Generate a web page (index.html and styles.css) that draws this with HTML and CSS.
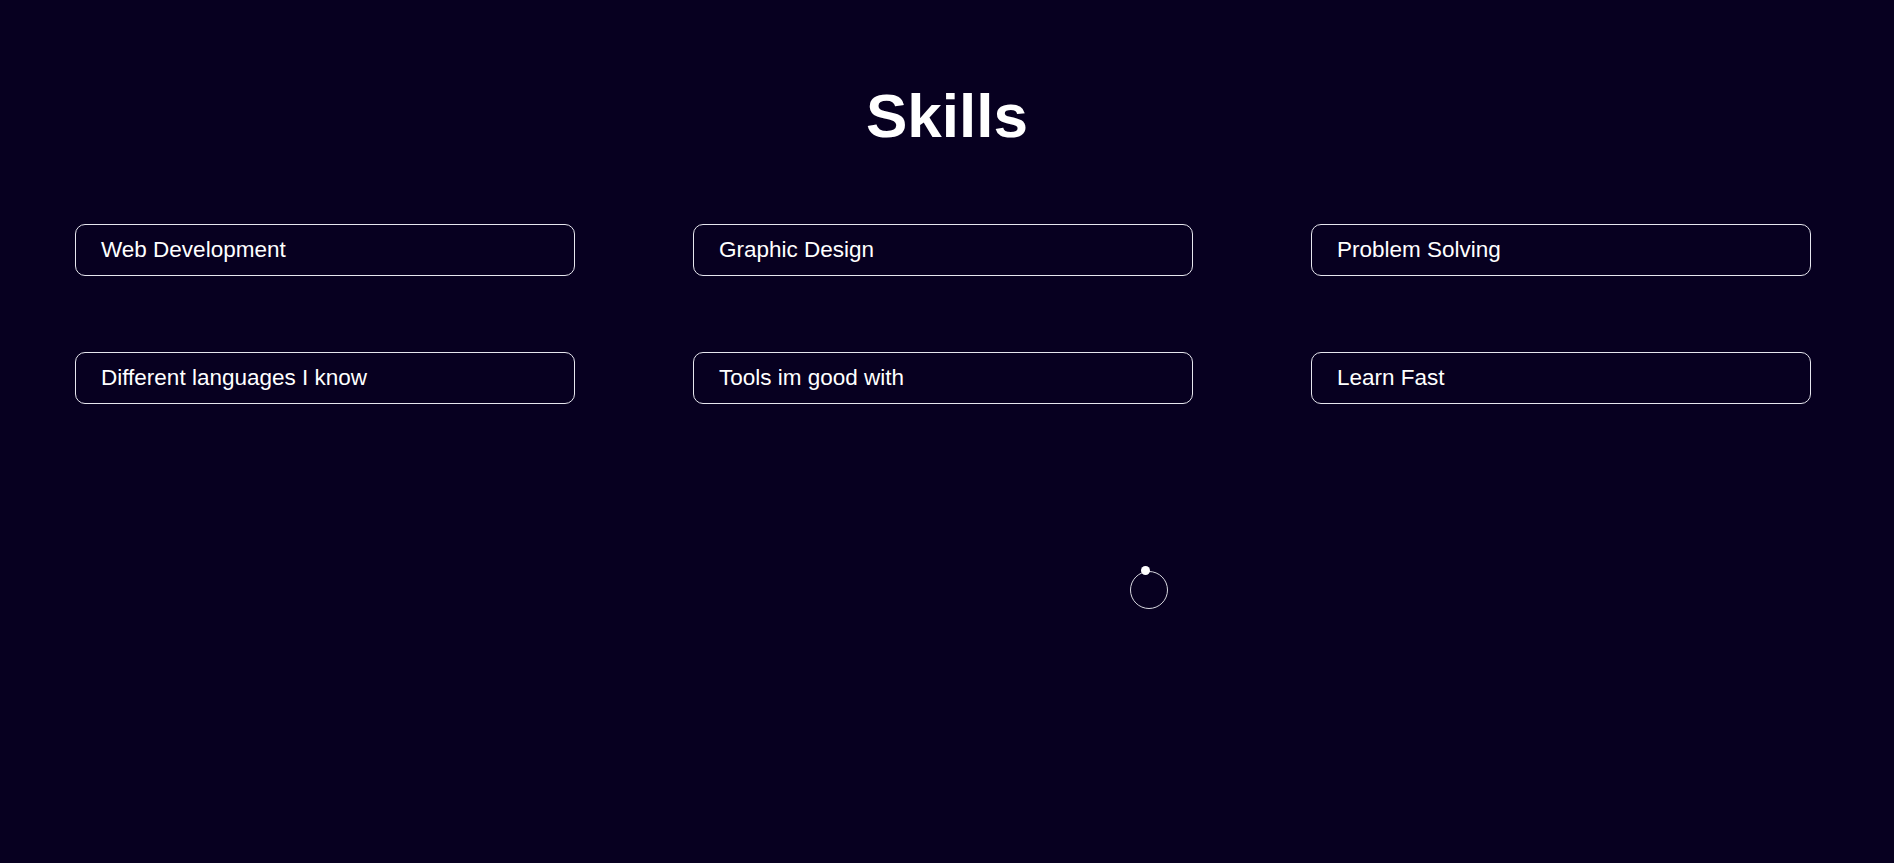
FILE: index.html
```html
<!DOCTYPE html>
<html lang="en">
<head>
<meta charset="utf-8">
<title>Skills</title>
<link rel="stylesheet" href="styles.css">
</head>
<body>
<section class="skills">
  <h1 class="skills-title">Skills</h1>
  <div class="skills-grid">
    <div class="skill">Web Development</div>
    <div class="skill">Graphic Design</div>
    <div class="skill">Problem Solving</div>
    <div class="skill">Different languages I know</div>
    <div class="skill">Tools im good with</div>
    <div class="skill">Learn Fast</div>
  </div>
</section>
<div class="cursor-ring"></div>
<div class="cursor-dot"></div>
</body>
</html>
```

FILE: styles.css
```css
html, body {
  margin: 0;
  padding: 0;
  height: 100%;
}
body {
  background: #070020;
  color: #ffffff;
  font-family: "Liberation Sans", Arial, sans-serif;
  overflow: hidden;
}
.skills {
  padding-top: 80px;
}
.skills-title {
  margin: 0;
  font-size: 62px;
  font-weight: 700;
  line-height: 72px;
  text-align: center;
}
.skills-grid {
  margin-top: 72px;
  padding-left: 75px;
  display: grid;
  grid-template-columns: repeat(3, 500px);
  column-gap: 118px;
  row-gap: 76px;
}
.skill {
  box-sizing: border-box;
  height: 52px;
  border: 1px solid #e6e6ee;
  border-radius: 10px;
  padding: 12px 25px;
  font-size: 22.5px;
  line-height: 26px;
}
.cursor-ring {
  position: absolute;
  left: 1130px;
  top: 571px;
  width: 38px;
  height: 38px;
  box-sizing: border-box;
  border: 1px solid #d8d8e0;
  border-radius: 50%;
}
.cursor-dot {
  position: absolute;
  left: 1141px;
  top: 566px;
  width: 9px;
  height: 9px;
  background: #ffffff;
  border-radius: 50%;
}
```
